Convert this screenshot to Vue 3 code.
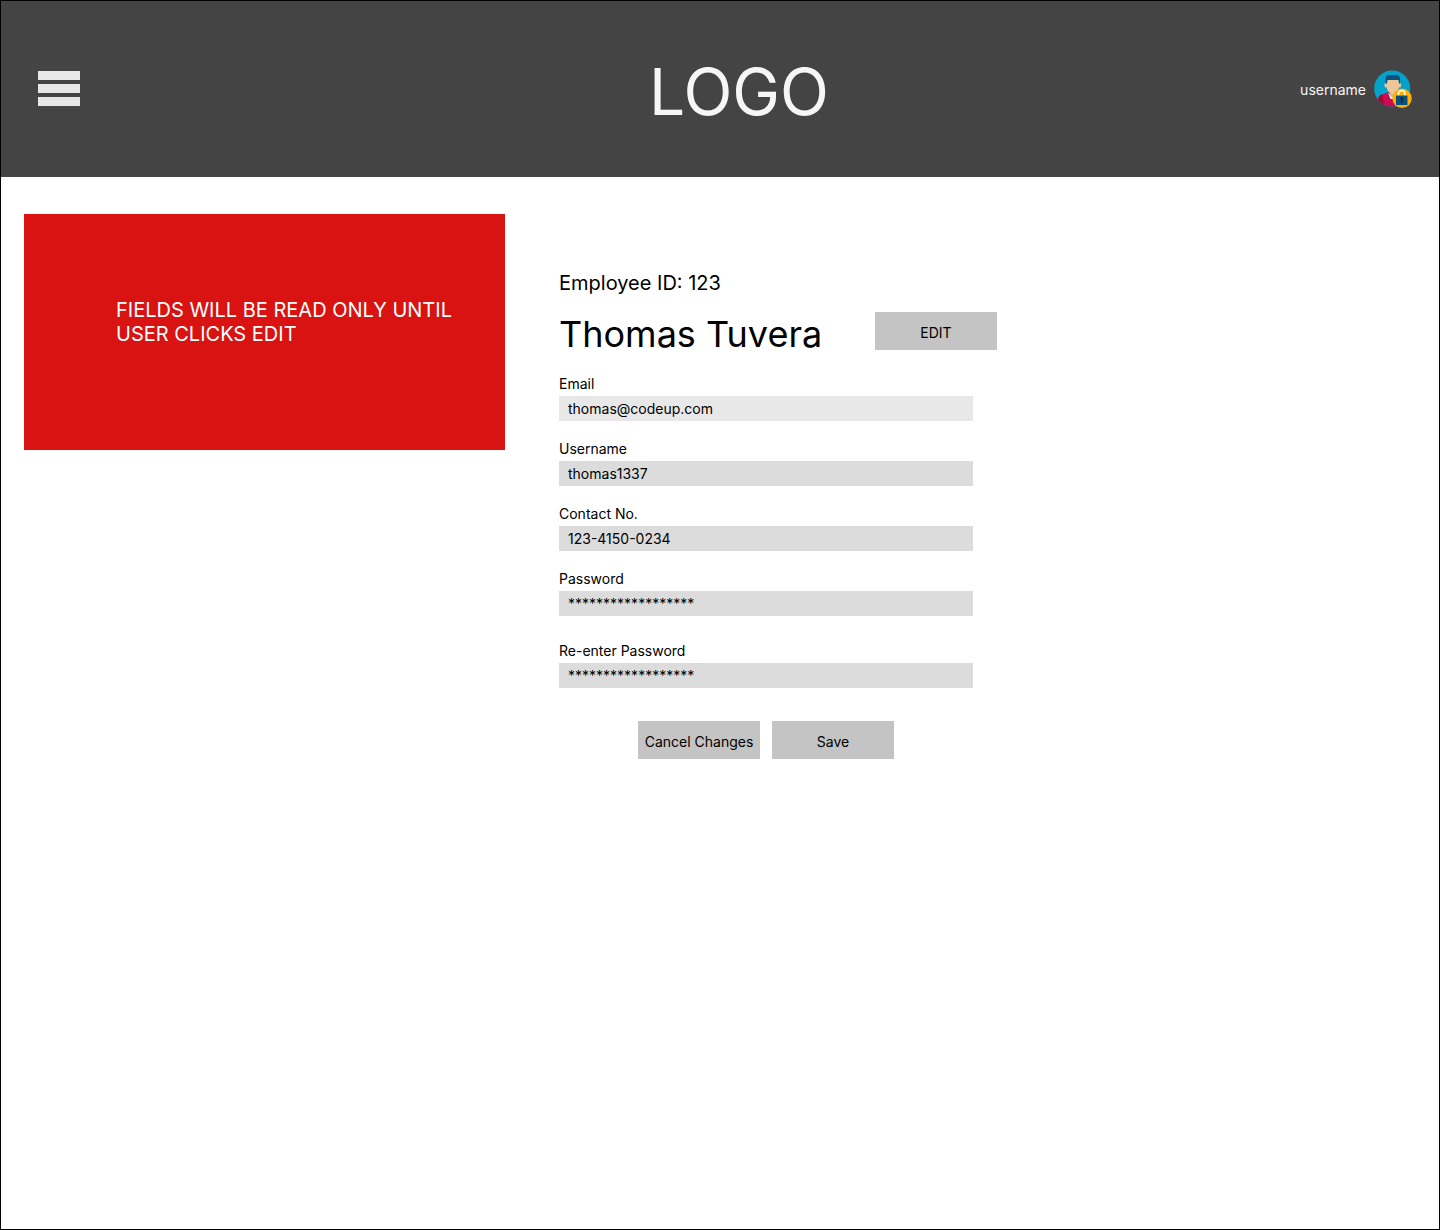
<script setup>
import { reactive } from 'vue'

const groups = reactive([
  [
    { id: 'email', label: 'Email', value: 'thomas@codeup.com', light: true },
    { id: 'username', label: 'Username', value: 'thomas1337' },
    { id: 'contact', label: 'Contact No.', value: '123-4150-0234' },
    { id: 'password', label: 'Password', value: '******************' },
  ],
  [{ id: 'confirm', label: 'Re-enter Password', value: '******************' }],
])
</script>

<template>
  <div class="page">
    <header class="header">
      <button class="menu" type="button" aria-label="Menu">
        <span class="bar"></span>
        <span class="bar"></span>
        <span class="bar"></span>
      </button>
      <div class="logo">LOGO</div>
      <a class="user" href="#">
        <span>username</span>
        <svg class="avatar" width="38" height="39" viewBox="0 0 38 39" aria-hidden="true">
          <defs>
            <clipPath id="disc"><circle cx="18.2" cy="18.5" r="18" /></clipPath>
          </defs>
          <circle cx="18.2" cy="18.5" r="18" fill="#03a2ca" />
          <g clip-path="url(#disc)">
            <path d="M4 39V30Q4 25 9 24L14 22.5H23L28 24Q33 25 33 30V39Z" fill="#cb0b51" />
            <path d="M4 39V30Q4 26 8 24.5Q10 28 9.5 39Z" fill="#a2082f" />
            <path d="M14 23L18.5 27L23 23L20 29H16.5Z" fill="#f3f3f3" />
            <path d="M15.5 20H22V24.5L18.7 27.5L15.5 24.5Z" fill="#e5b48a" />
            <path d="M12.5 9H25V17Q24.5 22 18.7 24Q13 22 12.5 17Z" fill="#f0c59b" />
            <rect x="10.5" y="13" width="3" height="4.5" rx="1.5" fill="#f0c59b" />
            <rect x="24" y="13" width="3" height="4.5" rx="1.5" fill="#f0c59b" />
            <path d="M11.5 13.5V8Q12 5 15 5H22Q26 5 26 9V13.5H25L24.5 10H13.5L13 13.5Z" fill="#0a527e" />
          </g>
          <circle cx="28" cy="28.3" r="9.7" fill="#fcb205" />
          <path d="M24.5 26V24Q24.5 20.7 27.8 20.7Q31 20.7 31 24V26" fill="none" stroke="#fff3dc" stroke-width="1.7" />
          <rect x="22" y="25.5" width="11.5" height="9.5" rx="0.5" fill="#0a527e" />
          <path d="M26 28.5Q26 26.8 27.8 26.8Q29.5 26.8 29.5 28.5L28.6 30V33H27V30Z" fill="#082b49" />
        </svg>
      </a>
    </header>

    <main class="content">
      <aside class="notice">
        <p>FIELDS WILL BE READ ONLY UNTIL USER CLICKS EDIT</p>
      </aside>

      <form class="profile" @submit.prevent>
        <p class="employee">Employee ID: 123</p>
        <div class="title">
          <h1>Thomas Tuvera</h1>
          <button class="action" type="button">EDIT</button>
        </div>
        <div class="fields">
          <div v-for="(group, i) in groups" :key="i" class="group">
            <div v-for="field in group" :key="field.id" class="field">
              <label :for="field.id">{{ field.label }}</label>
              <input
                :id="field.id"
                v-model="field.value"
                :class="{ light: field.light }"
                type="text"
                readonly
              />
            </div>
          </div>
          <div class="actions">
            <button class="action" type="button">Cancel Changes</button>
            <button class="action" type="submit">Save</button>
          </div>
        </div>
      </form>
    </main>
  </div>
</template>

<style>
body {
  margin: 0;
  background: #fff;
}
</style>

<style scoped>
.page,
.page * {
  box-sizing: border-box;
}
.page {
  min-height: 100vh;
  border: 1px solid #000;
  font-family: Inter, "Liberation Sans", sans-serif;
  font-size: 14px;
  line-height: 17px;
  color: #000;
}
p,
h1 {
  margin: 0;
  font-weight: 400;
}
button,
input {
  border: 0;
  border-radius: 0;
  font: inherit;
  color: inherit;
}
.header {
  display: grid;
  grid-template-columns: 1fr auto 1fr;
  align-items: center;
  min-height: 176px;
  padding: 0 27px 0 37px;
  background: #444;
  color: #f6f6f6;
}
.menu {
  display: flex;
  flex-direction: column;
  gap: 4px;
  width: 42px;
  padding: 0 0 2px;
  background: none;
}
.bar {
  height: 9px;
  background: #e7e7e7;
}
.logo {
  padding: 4px 0 0 28px;
  font-size: 64px;
  line-height: 77px;
}
.user {
  display: flex;
  justify-content: flex-end;
  align-items: center;
  gap: 8px;
  color: inherit;
  text-decoration: none;
}
.avatar {
  flex: none;
}
.content {
  display: flex;
  align-items: flex-start;
  gap: 54px;
  padding: 37px 23px;
}
.notice {
  flex: 0 1 481px;
  min-height: 236px;
  padding: 84px 40px 84px 92px;
  background: #d81311;
  color: #fff;
  font-size: 20px;
  line-height: 24px;
}
.profile {
  flex: 0 1 438px;
  padding-top: 57px;
}
.employee {
  font-size: 20px;
  line-height: 24px;
}
.title {
  display: flex;
  justify-content: space-between;
  align-items: flex-start;
  margin: 17px 0 19px;
}
h1 {
  font-size: 36px;
  line-height: 44px;
}
.action {
  width: 122px;
  height: 38px;
  padding: 2px 0 0;
  background: #c4c4c4;
  text-align: center;
}
.fields {
  max-width: 414px;
}
.group {
  display: flex;
  flex-direction: column;
  gap: 19px;
}
.group + .group {
  margin-top: 26px;
}
.field {
  display: flex;
  flex-direction: column;
  gap: 4px;
}
.field input {
  width: 100%;
  height: 25px;
  padding: 0 9px;
  background: #dcdcdc;
  outline: none;
}
.field input.light {
  background: #e8e8e8;
}
.actions {
  display: flex;
  justify-content: center;
  gap: 12px;
  margin-top: 33px;
}
</style>
